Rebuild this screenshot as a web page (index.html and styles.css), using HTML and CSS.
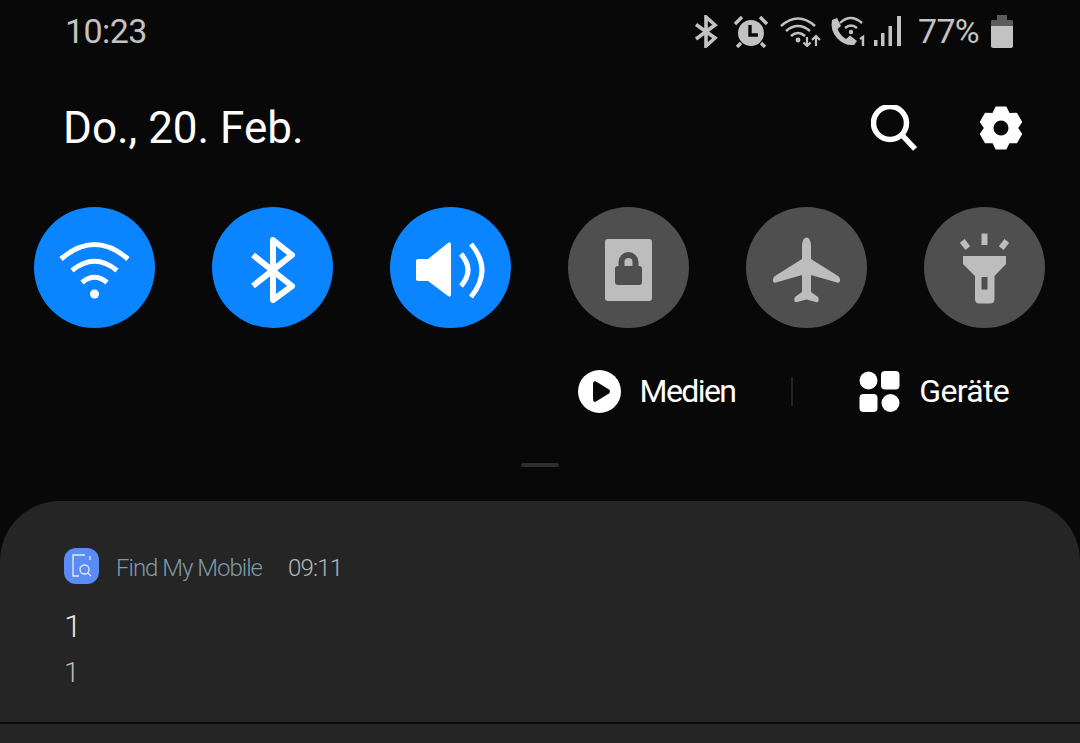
FILE: index.html
```html
<!DOCTYPE html>
<html lang="de">
<head>
  <meta charset="UTF-8">
  <title>Quick panel</title>
  <link rel="stylesheet" href="styles.css">
</head>
<body>
  <div class="status-bar">
    <div class="clock">10:23</div>
    <div class="status-icons">
      <svg class="ic-bt" width="25" height="33" viewBox="0 0 25 33" fill="none" stroke="#c2c2c2" stroke-width="3.6">
        <path d="M2 9.5L21 23L12 31V2L21 10L2 24"/>
      </svg>
      <svg class="ic-alarm" width="36" height="33" viewBox="0 0 36 33">
        <circle cx="18" cy="18" r="13" fill="#c2c2c2"/>
        <path d="M2 9L9 2M34 9L27 2M8 28L4 32M28 28L32 32" stroke="#c2c2c2" stroke-width="3.400" fill="none"/>
        <path d="M17 10V20H25" stroke="#0a0a0a" stroke-width="3.4" fill="none"/>
      </svg>
      <svg class="ic-wifi" width="42" height="32" viewBox="0 0 42 32" fill="none" stroke="#c2c2c2" stroke-width="2.6">
        <path d="M1 11Q18 -4 35 11M6 16Q18 6 30 16M11 21Q18 15 25 21"/>
        <circle cx="18" cy="25" r="2.4" fill="#c2c2c2" stroke="none"/>
        <path d="M27 22V31M23.5 27.5L27 31L30.5 27.5M36 31V21M32 25L36 21L40 25" stroke-width="2.2"/>
      </svg>
      <svg class="ic-call" width="38" height="32" viewBox="0 0 38 32">
        <path d="M3 5L8 3L12 11L8.500 14Q11 20 17 24L21 20.500L28 26L25 30Q15 31 8 23Q1 15 3 5Z" fill="#c2c2c2"/>
        <path d="M11 8Q21.500 -2 33 8M16 13Q22 8 28 13" fill="none" stroke="#c2c2c2" stroke-width="2.4"/>
        <circle cx="22" cy="17" r="2.2" fill="#c2c2c2"/>
        <path d="M31 24L34 22V31" fill="none" stroke="#c2c2c2" stroke-width="2.400"/>
      </svg>
      <svg class="ic-signal" width="28" height="30" viewBox="0 0 28 30" fill="#c2c2c2">
        <rect x="0" y="24" width="3.500" height="6"/>
        <rect x="7" y="17" width="3.500" height="13"/>
        <rect x="14.500" y="10" width="3.500" height="20"/>
        <rect x="23" y="0" width="4" height="30"/>
      </svg>
      <div class="battery-text">77%</div>
      <svg class="ic-battery" width="22" height="33" viewBox="0 0 22 33">
        <path d="M6 0H16V5H21Q22 5 22 6V11H0V6Q0 5 1 5H6Z" fill="#5a5a5a"/>
        <path d="M0 11H22V31Q22 33 20 33H2Q0 33 0 31Z" fill="#c2c2c2"/>
      </svg>
    </div>
  </div>

  <div class="header">
    <div class="date">Do., 20. Feb.</div>
    <div class="header-icons">
      <svg width="46" height="46" viewBox="0 0 46 46" fill="none" stroke="#fff" stroke-width="5.500">
        <circle cx="19" cy="18" r="16.500"/>
        <path d="M31 30L44 44"/>
      </svg>
      <svg width="44" height="46" viewBox="0 0 44 46">
        <polygon points="17.3,2.5 26.7,2.5 30,9.100 37.400,8.700 42.100,16.900 38,23 42.100,29.100 37.400,37.300 30,36.900 26.700,43.500 17.300,43.500 14,36.900 6.600,37.300 1.900,29.100 6,23 1.900,16.900 6.600,8.700 14,9.100" fill="#fff" stroke="#fff" stroke-width="2" stroke-linejoin="round"/>
        <circle cx="22" cy="23" r="7.500" fill="#080808"/>
      </svg>
    </div>
  </div>

  <div class="toggles">
    <div class="toggle on">
      <svg viewBox="0 0 121 121" fill="none" stroke="#fff" stroke-width="5">
        <path d="M27 52Q60.500 23 94 52M38 63.500Q60.500 45 83 63.500M48 75.500Q60.500 65 73 75.500"/>
        <circle cx="60.500" cy="87" r="4.500" fill="#fff" stroke="none"/>
      </svg>
    </div>
    <div class="toggle on">
      <svg viewBox="0 0 121 121" fill="none" stroke="#fff" stroke-width="6" stroke-linejoin="round">
        <path d="M41 48L80 79L61 93V33L80 48L41 79"/>
      </svg>
    </div>
    <div class="toggle on">
      <svg viewBox="0 0 121 121" fill="none" stroke="#fff" stroke-width="5">
        <path d="M28 52H38L58 36Q61 34 61 38V87Q61 91 58 89L38 74H28Q26 74 26 72V54Q26 52 28 52Z" fill="#fff" stroke="none"/>
        <path d="M71 47Q85 63 71 79M81 37Q103 63 81 90"/>
      </svg>
    </div>
    <div class="toggle">
      <svg viewBox="0 0 121 121">
        <rect x="37" y="32" width="47" height="62" rx="3" fill="#bdbdbd"/>
        <path d="M53.500 60V55A7 7 0 0 1 67.500 55V60" fill="none" stroke="#4f4f4f" stroke-width="6"/>
        <rect x="47" y="59" width="27" height="19" rx="3" fill="#4f4f4f"/>
      </svg>
    </div>
    <div class="toggle">
      <svg viewBox="0 0 121 121">
        <path d="M60.500 30.500C63.500 30.500 65 35 65 39V52L92 69Q94.500 71 94 74Q93.500 76.500 91 75.500L65 68V85L72 90Q73 92 72.500 94Q72 95.500 70 95L60.500 92.500L51 95Q49 95.500 48.500 94Q48 92 49 90L56 85V68L30 75.500Q27.500 76.500 27 74Q26.500 71 29 69L56 52V39C56 35 57.500 30.500 60.500 30.500Z" fill="#bdbdbd"/>
      </svg>
    </div>
    <div class="toggle">
      <svg viewBox="0 0 121 121" fill="#bdbdbd">
        <rect x="57.500" y="26.500" width="6" height="11.500"/>
        <rect x="38" y="33" width="6" height="9" transform="rotate(-38 41 37.500)"/>
        <rect x="77" y="33" width="6" height="9" transform="rotate(38 80 37.500)"/>
        <path fill-rule="evenodd" d="M39 49H82V57L70.500 69V92Q70.500 96.500 66 96.500H55.500Q51 96.500 51 92V69L39 57ZM57.500 70V82.500H63.500V70Z"/>
      </svg>
    </div>
  </div>

  <div class="media-row">
    <div class="media-item">
      <svg width="43" height="43" viewBox="0 0 43 43">
        <circle cx="21.500" cy="21.500" r="21.500" fill="#fff"/>
        <path d="M15 14.500V29Q15 33 18 31.500L31 23.500Q33 21.500 31 19.500L18 11.500Q15 10 15 14.500Z" fill="#080808"/>
      </svg>
      <span class="label-media">Medien</span>
    </div>
    <div class="sep"></div>
    <div class="media-item">
      <svg width="41" height="41" viewBox="0 0 41 41" fill="#fff">
        <circle cx="9.500" cy="9.500" r="9"/>
        <rect x="22" y="0" width="18.500" height="18.500" rx="4"/>
        <rect x="0.500" y="23" width="18" height="18" rx="4"/>
        <circle cx="31.500" cy="32" r="9"/>
      </svg>
      <span class="label-devices">Geräte</span>
    </div>
  </div>

  <div class="handle"></div>

  <div class="panel">
    <div class="notification">
      <div class="notif-head">
        <div class="app-icon">
          <svg width="24" height="24" viewBox="0 0 24 24" fill="none" stroke="#e4edff" stroke-width="1.300">
            <path d="M15 1H3V22H9M20 2V6"/>
            <circle cx="14.500" cy="15.500" r="4.500"/>
            <path d="M18 19L21 22"/>
          </svg>
        </div>
        <span class="app-name">Find My Mobile</span>
        <span class="notif-time">09:11</span>
      </div>
      <div class="notif-title">1</div>
      <div class="notif-body">1</div>
    </div>
    <div class="divider"></div>
  </div>
</body>
</html>
```

FILE: styles.css
```css
/* Quick panel */
body {
  margin: 0;
  height: 743px;
  overflow: hidden;
  background-color: #080808;
  font-family: Roboto, "Noto Sans", sans-serif;
  color: #fff;
}

svg {
  display: block;
}

.status-bar {
  height: 62px;
  padding: 0 67px 0 65px;
  display: flex;
  align-items: center;
  justify-content: space-between;
  color: #c2c2c2;
}
.clock {
  font-size: 34px;
  letter-spacing: -0.6px;
}
.status-icons {
  display: flex;
  align-items: center;
}
.ic-alarm {
  margin-left: 14px;
}
.ic-wifi {
  margin-left: 11px;
}
.ic-call {
  margin-left: 7px;
}
.ic-signal {
  margin-left: 7px;
}
.battery-text {
  font-size: 34px;
  letter-spacing: -0.7px;
  margin: 0 12px 0 16px;
}

.header {
  height: 132px;
  padding: 0 57px 0 63px;
  display: flex;
  align-items: center;
  justify-content: space-between;
}
.date {
  font-size: 44px;
}
.header-icons {
  display: flex;
  align-items: center;
  gap: 62px;
}

.toggles {
  margin-top: 13px;
  padding: 0 35px 0 34px;
  display: flex;
  justify-content: space-between;
}
.toggle {
  width: 121px;
  height: 121px;
  border-radius: 50%;
  background-color: #4f4f4f;
}
.toggle.on {
  background-color: #0b84ff;
}

.media-row {
  margin-top: 41px;
  height: 44px;
  padding-right: 71px;
  display: flex;
  align-items: center;
  justify-content: flex-end;
}
.media-item {
  display: flex;
  align-items: center;
  gap: 19px;
  font-size: 32px;
}
.label-media {
  letter-spacing: -1.6px;
}
.label-devices {
  letter-spacing: -0.7px;
}
.sep {
  width: 2px;
  height: 29px;
  margin: 0 66px 0 56px;
  background-color: #242424;
}

.handle {
  width: 38px;
  height: 4px;
  margin: 50px auto 34px;
  border-radius: 2px;
  background-color: #2e2e2e;
}

.panel {
  height: 243px;
  border-radius: 60px 60px 0 0;
  background-color: #252525;
}
.notification {
  height: 221px;
  padding: 47px 64px 0;
  box-sizing: border-box;
}
.notif-head {
  display: flex;
  align-items: center;
  height: 36px;
  font-size: 24px;
  font-weight: 300;
}
.app-icon {
  width: 35px;
  height: 36px;
  margin-right: 17px;
  border-radius: 12px;
  background-color: #5b8cf5;
  display: flex;
  align-items: center;
  justify-content: center;
}
.app-name {
  margin-top: 3px;
  color: #7f9aa8;
  letter-spacing: -1px;
}
.notif-time {
  margin: 3px 0 0 26px;
  color: #b8b8b8;
  letter-spacing: -0.8px;
}
.notif-title {
  margin-top: 23px;
  font-size: 32px;
  font-weight: 300;
  color: #e8e8e8;
}
.notif-body {
  margin-top: 11px;
  font-size: 28px;
  font-weight: 300;
  color: #b8b8b8;
}
.divider {
  height: 2px;
  background-color: #0a0a0a;
}
```
